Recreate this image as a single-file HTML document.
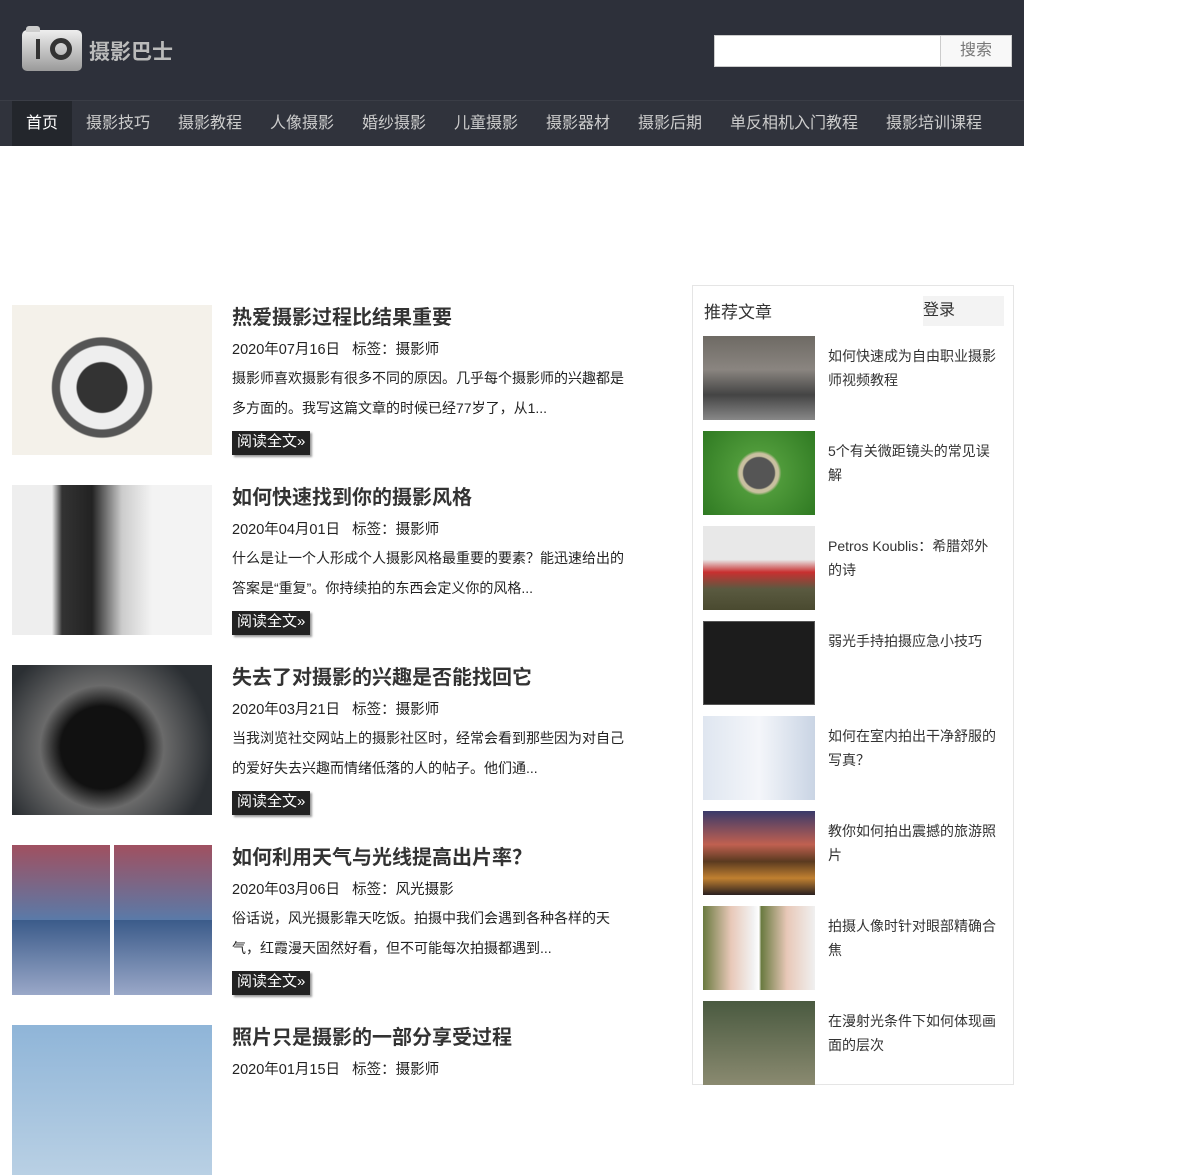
<!DOCTYPE html><html><head><meta charset="utf-8"><style>
*{margin:0;padding:0;box-sizing:border-box}
body{width:1200px;height:1063px;overflow:hidden;background:#fff;font-family:"Liberation Sans","Noto Sans CJK SC",sans-serif;color:#333;position:relative}
.hd{position:absolute;left:0;top:0;width:1024px;height:100px;background:#2d303a}
.nav{position:absolute;left:0;top:100px;width:1024px;height:46px;background:#30333c;border-top:1px solid #3a3d46}
.nav span{position:absolute;top:0;height:45px;line-height:45px;color:#ccc;font-size:16px}
.nav .on{background:#23262c;color:#fff;padding:0 14px}
.logo{position:absolute;left:22px;top:30px;width:60px;height:41px;border-radius:5px;background:linear-gradient(#eee,#9a9a9a)}
.logo:before{content:"";position:absolute;left:4px;top:-4px;width:14px;height:6px;background:#ccc;border-radius:3px 3px 0 0}
.logo i{position:absolute;left:14px;top:9px;width:4px;height:20px;background:#333}
.logo b{position:absolute;left:28px;top:8px;width:22px;height:22px;border-radius:50%;border:5px solid #333}
.lt{position:absolute;left:89px;top:36px;font-size:21px;color:#bbb;font-weight:bold}
.srch{position:absolute;left:714px;top:35px;width:298px;height:32px;background:#fff;border:1px solid #ccc}
.srch span{position:absolute;right:0;top:0;width:71px;height:30px;border-left:1px solid #ccc;background:#f8f8f8;text-align:center;line-height:30px;color:#777;font-size:16px}
.a{position:absolute;left:12px;width:640px;height:150px}
.a .im{position:absolute;left:0;top:0;width:200px;height:150px}
.a h2{position:absolute;left:220px;top:-4px;font-size:20px;color:#333;font-weight:bold}
.a .m{position:absolute;left:220px;top:33px;font-size:14.5px;color:#222}
.a p{position:absolute;left:220px;top:58px;width:400px;font-size:14px;line-height:30px;color:#222}
.a .btn{position:absolute;left:220px;top:126px;height:24px;line-height:22px;padding:0 5px;background:#222;color:#fff;font-size:15px;box-shadow:2px 2px 2px #999}
.sb{position:absolute;left:692px;top:285px;width:322px;height:800px;border:1px solid #e5e5e5}
.sb h3{position:absolute;left:11px;top:12px;font-size:17px;font-weight:normal;color:#333}
.login{position:absolute;left:230px;top:10px;width:81px;height:30px;background:#f3f3f3;font-size:16px;line-height:30px;color:#333}
.it{position:absolute;left:10px;width:300px;height:84px}
.it .t{position:absolute;left:0;top:0;width:112px;height:84px}
.it p{position:absolute;left:125px;top:8px;width:171px;font-size:14px;line-height:24px;color:#333}
</style></head><body>
<div class="hd"><div class="logo"><i></i><b></b></div><div class="lt">摄影巴士</div><div class="srch"><span>搜索</span></div></div>
<div class="nav"><span class="on" style="left:12px">首页</span><span style="left:86px">摄影技巧</span><span style="left:178px">摄影教程</span><span style="left:270px">人像摄影</span><span style="left:362px">婚纱摄影</span><span style="left:454px">儿童摄影</span><span style="left:546px">摄影器材</span><span style="left:638px">摄影后期</span><span style="left:730px">单反相机入门教程</span><span style="left:886px">摄影培训课程</span></div>

<div class="a" style="top:305px"><div class="im" style="background:radial-gradient(circle at 45% 55%,#333 0 18%,#eee 19% 30%,#555 31% 36%,#f4f1ea 37%)"></div><h2>热爱摄影过程比结果重要</h2><div class="m">2020年07月16日&nbsp;&nbsp; 标签：摄影师</div><p>摄影师喜欢摄影有很多不同的原因。几乎每个摄影师的兴趣都是多方面的。我写这篇文章的时候已经77岁了，从1...</p><div class="btn">阅读全文»</div></div>
<div class="a" style="top:485px"><div class="im" style="background:linear-gradient(90deg,#eee 0 20%,#333 25%,#222 40%,#ccc 55%,#f3f3f3 70%)"></div><h2>如何快速找到你的摄影风格</h2><div class="m">2020年04月01日&nbsp;&nbsp; 标签：摄影师</div><p>什么是让一个人形成个人摄影风格最重要的要素？能迅速给出的答案是“重复”。你持续拍的东西会定义你的风格...</p><div class="btn">阅读全文»</div></div>
<div class="a" style="top:665px"><div class="im" style="background:radial-gradient(circle at 45% 55%,#111 0 30%,#6a6a6a 45%,#2b2f33 80%)"></div><h2>失去了对摄影的兴趣是否能找回它</h2><div class="m">2020年03月21日&nbsp;&nbsp; 标签：摄影师</div><p>当我浏览社交网站上的摄影社区时，经常会看到那些因为对自己的爱好失去兴趣而情绪低落的人的帖子。他们通...</p><div class="btn">阅读全文»</div></div>
<div class="a" style="top:845px"><div class="im" style="background:linear-gradient(90deg,transparent 49%,#fff 49% 51%,transparent 51%),linear-gradient(#a05060,#5a7aa8 50%,#3b5b8a 50%,#9aa8c8)"></div><h2>如何利用天气与光线提高出片率？</h2><div class="m">2020年03月06日&nbsp;&nbsp; 标签：风光摄影</div><p>俗话说，风光摄影靠天吃饭。拍摄中我们会遇到各种各样的天气，红霞漫天固然好看，但不可能每次拍摄都遇到...</p><div class="btn">阅读全文»</div></div>
<div class="a" style="top:1025px"><div class="im" style="background:linear-gradient(#8fb5d8,#b9d0e4)"></div><h2>照片只是摄影的一部分享受过程</h2><div class="m">2020年01月15日&nbsp;&nbsp; 标签：摄影师</div></div>

<div class="sb"><h3>推荐文章</h3><div class="login">登录</div>
<div class="it" style="top:50px"><div class="t" style="background:linear-gradient(#6e6a64,#8a8580 40%,#444 70%,#888)"></div><p>如何快速成为自由职业摄影师视频教程</p></div>
<div class="it" style="top:145px"><div class="t" style="background:radial-gradient(circle,#555 0 22%,#c9c0a0 24% 28%,#4f9a3a 32%,#2f7a22)"></div><p>5个有关微距镜头的常见误解</p></div>
<div class="it" style="top:240px"><div class="t" style="background:linear-gradient(#e8e8e8 40%,#c83030 55%,#5a5a40 75%,#4a4a30)"></div><p>Petros Koublis：希腊郊外的诗</p></div>
<div class="it" style="top:335px"><div class="t" style="background:#1c1c1c;border:1px solid #555"></div><p>弱光手持拍摄应急小技巧</p></div>
<div class="it" style="top:430px"><div class="t" style="background:linear-gradient(90deg,#dfe6f0,#f4f6fa 50%,#c9d4e4)"></div><p>如何在室内拍出干净舒服的写真？</p></div>
<div class="it" style="top:525px"><div class="t" style="background:linear-gradient(#3a3a6a,#c06050 40%,#5a3a20 60%,#c08030 80%,#2a2020)"></div><p>教你如何拍出震撼的旅游照片</p></div>
<div class="it" style="top:620px"><div class="t" style="background:linear-gradient(90deg,#6a7a40,#e8c8b8 25%,#f2f2f2 45%,#fff 50%,#6a7a40 52%,#e8c8b8 75%,#f0f0f0)"></div><p>拍摄人像时针对眼部精确合焦</p></div>
<div class="it" style="top:715px"><div class="t" style="background:linear-gradient(#4a5a40,#8a8a70)"></div><p>在漫射光条件下如何体现画面的层次</p></div>
</div>
</body></html>
